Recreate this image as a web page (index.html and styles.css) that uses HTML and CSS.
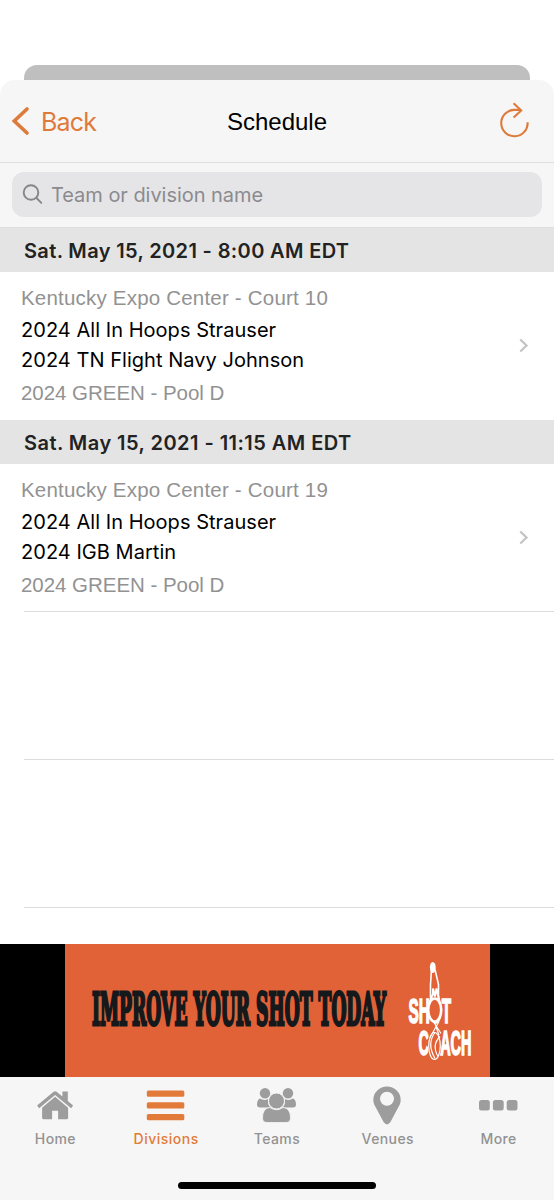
FILE: index.html
```html
<!DOCTYPE html>
<html lang="en">
<head>
<meta charset="utf-8">
<title>Schedule</title>
<link rel="stylesheet" href="styles.css">
</head>
<body>
<div class="screen">
  <div class="backdrop"><div class="backdrop-card"></div></div>
  <div class="sheet">
    <header class="navbar">
      <a class="back">
        <svg class="back-icon" width="20" height="30" viewBox="0 0 20 30"><path d="M17 3 4.300 15 17 27" fill="none" stroke="#de7a3a" stroke-width="3.600" stroke-linecap="round" stroke-linejoin="miter"/></svg>
        <span class="back-label">Back</span>
      </a>
      <h1 class="title">Schedule</h1>
      <svg class="refresh" width="34" height="38" viewBox="0 0 34 38"><g fill="none" stroke="#de7a3a" stroke-width="2.100"><path d="M29.600 20.200A13.200 13.200 0 1 1 16.600 7.900H22.500"/><path d="M15.600 1.300 23.200 8.500 15.600 15.500"/></g></svg>
    </header>
    <div class="search-bar">
      <div class="search-field">
        <svg width="22" height="22" viewBox="0 0 22 22"><g fill="none" stroke="#85858a" stroke-width="1.900" stroke-linecap="round"><circle cx="9" cy="8.500" r="7.300"/><path d="M14.500 14 19.300 18.800"/></g></svg>
        <span class="placeholder">Team or division name</span>
      </div>
    </div>
    <main class="list">
      <h2 class="section"><span class="date-a">Sat. May 15, 2021 - 8:00 AM EDT</span></h2>
      <article class="game">
        <div class="details">
          <p class="place">Kentucky Expo Center - Court 10</p>
          <p class="team">2024 All In Hoops Strauser</p>
          <p class="team">2024 TN Flight Navy Johnson</p>
          <p class="pool">2024 GREEN - Pool D</p>
        </div>
        <svg class="chevron" width="12" height="18" viewBox="0 0 12 18"><path d="M2.300 2.500 8.500 8.500 2.300 14.500" fill="none" stroke="#c3c3c5" stroke-width="2.200"/></svg>
      </article>
      <h2 class="section"><span class="date-b">Sat. May 15, 2021 - 11:15 AM EDT</span></h2>
      <article class="game short">
        <div class="details">
          <p class="place">Kentucky Expo Center - Court 19</p>
          <p class="team">2024 All In Hoops Strauser</p>
          <p class="team">2024 IGB Martin</p>
          <p class="pool">2024 GREEN - Pool D</p>
        </div>
        <svg class="chevron" width="12" height="18" viewBox="0 0 12 18"><path d="M2.300 2.500 8.500 8.500 2.300 14.500" fill="none" stroke="#c3c3c5" stroke-width="2.200"/></svg>
      </article>
      <div class="empty-row"></div>
      <div class="empty-row"></div>
      <div class="empty-row last"></div>
    </main>
    <div class="ad">
      <svg class="ad-art" width="425" height="132" viewBox="65 945 425 132">
        <text class="slogan" transform="translate(92 1025) scale(1 1.780)" textLength="294" lengthAdjust="spacingAndGlyphs">IMPROVE YOUR SHOT TODAY</text>
        <g class="brand">
          <text transform="translate(408.500 1023) scale(1 1.850)" textLength="42.500" lengthAdjust="spacingAndGlyphs">SHOT</text>
          <text transform="translate(418.500 1055) scale(1 1.850)" textLength="53" lengthAdjust="spacingAndGlyphs">COACH</text>
        </g>
        <ellipse cx="434.500" cy="1045" rx="6.800" ry="15.500" fill="#e16237"/>
        <g fill="none" stroke="#fff" stroke-width="1.200">
          <ellipse cx="434.700" cy="1010.500" rx="6.500" ry="11.500" fill="#e16237" stroke-width="2.600"/>
          <path d="M430.500 1001V985L431.500 970M438.500 1001V985L435 970" stroke-width="1.600"/>
          <path d="M430 1002 433 994V989L435 997 436.500 989 439.500 1002" stroke-width="2"/>
          <ellipse cx="434.500" cy="1046.500" rx="5.800" ry="13.500"/>
          <path d="M435 1033C428 1042 431 1052 435 1059M440 1037C434 1043 434 1050 438 1057"/>
          <path d="M434 1023 441 1034M439 1022 430 1038M435 1024 439 1036"/>
        </g>
        <ellipse cx="432.800" cy="968" rx="2.900" ry="5.500" fill="#fff"/>
      </svg>
    </div>
    <nav class="tabs">
      <a class="tab home"><svg width="44" height="44" viewBox="33.400 1082.700 44 44"><path fill="#9d9d9d" d="M42.500 1107.500 55.500 1096.500 68.500 1107.500V1117.500Q68.500 1119 67 1119H58.500V1110.500H52.500V1119H44Q42.500 1119 42.500 1117.500ZM37.500 1105.300 54 1091.500Q55.500 1090.300 57 1091.500L62.800 1096.300V1091.200H68.200V1100.800L73.500 1105.300 71.500 1108 55.500 1094.600 39.500 1108Z"/></svg><span>Home</span></a>
      <a class="tab divisions"><svg width="44" height="44" viewBox="144.200 1083 44 44"><g fill="#e27b39"><rect x="147" y="1090.500" width="37.500" height="6.200" rx="1.500"/><rect x="147" y="1102.300" width="37.500" height="6.200" rx="1.500"/><rect x="147" y="1114" width="37.500" height="6.200" rx="1.500"/></g></svg><span>Divisions</span></a>
      <a class="tab teams"><svg width="44" height="44" viewBox="255 1083 44 44"><g fill="#9d9d9d"><circle cx="265" cy="1093.300" r="5.200"/><circle cx="288" cy="1093.300" r="5.200"/><path d="M260 1098.500Q264 1101 268.200 1099Q267 1104 270.500 1107.500H261Q257 1108 257 1104.500Q257.200 1099.500 260 1098.500ZM293 1098.500Q289 1101 284.800 1099Q286 1104 282.500 1107.500H292Q296 1108 296 1104.500Q295.800 1099.500 293 1098.500Z"/><path stroke="#f6f6f6" stroke-width=".8" d="M270 1107.500Q276.500 1112 283 1107.500Q290.500 1108 290.500 1118Q290.500 1122.500 286 1122.500H267Q262.500 1122.500 262.500 1118Q262.500 1108 270 1107.500Z"/><circle cx="276.500" cy="1101" r="8" stroke="#f6f6f6"/></g></svg><span>Teams</span></a>
      <a class="tab venues"><svg width="44" height="44" viewBox="365.700 1083 44 44"><path fill="#9d9d9d" fill-rule="evenodd" d="M386.700 1086.500A13.700 13.400 0 0 1 400.400 1100Q400.400 1102.500 399.500 1104.500L390 1122.300Q386.700 1126.500 383.400 1122.300L373.900 1104.500Q373 1102.500 373 1100A13.700 13.400 0 0 1 386.700 1086.500ZM386.700 1091.800A7 7 0 1 0 386.700 1105.800A7 7 0 1 0 386.700 1091.800Z"/></svg><span>Venues</span></a>
      <a class="tab more"><svg width="44" height="44" viewBox="476.800 1083 44 44"><g fill="#9d9d9d"><rect x="478.800" y="1100" width="10.800" height="10.400" rx="2.500"/><rect x="492.700" y="1100" width="10.800" height="10.400" rx="2.500"/><rect x="506.500" y="1100" width="10.800" height="10.400" rx="2.500"/></g></svg><span>More</span></a>
    </nav>
    <div class="home-indicator"></div>
  </div>
</div>
</body>
</html>
```
FILE: styles.css
```css
* { box-sizing: border-box; margin: 0; padding: 0; }
body { background: #fff; font-family: Inter, "Liberation Sans", sans-serif; }
svg { display: block; flex: none; }
p, span, h1 { white-space: nowrap; }
.screen { width: 554px; height: 1200px; display: flex; flex-direction: column; overflow: hidden; background: #fff; }
.backdrop { padding: 65px 24px 0; height: 80px; }
.backdrop-card { height: 15px; background: #bfbfbf; border-radius: 13px 13px 0 0; }
.sheet { height: 1120px; display: flex; flex-direction: column; background: #f6f6f6; border-radius: 15px 15px 0 0; }
.navbar { height: 83px; display: grid; grid-template-columns: 1fr auto 1fr; align-items: center; border-bottom: 1.5px solid #dedede; }
.back { display: flex; align-items: center; gap: 11px; padding-left: 10px; }
.back-label { color: #de7a3a; font-size: 25px; letter-spacing: -.8px; line-height: 30px; padding-top: 1px; }
.title { font: 400 24px/30px "Liberation Sans", sans-serif; color: #000; padding-top: 2px; }
.refresh { justify-self: end; margin-right: 22.5px; }
.search-bar { height: 65px; padding: 9px 12px; border-bottom: 1px solid #dedede; background: #f6f6f6; }
.search-field { height: 45px; border-radius: 12px; background: #e5e5e7; display: flex; align-items: center; padding-left: 10px; gap: 7px; }
.placeholder { color: #8b8b8f; font-size: 20px; letter-spacing: -.04px; }
.list { height: 716px; background: #fff; }
.section { height: 44px; background: #e4e4e4; padding-left: 24px; font-size: 20px; font-weight: 600; line-height: 47px; color: #222; }
.date-a { letter-spacing: .36px; }
.date-b { letter-spacing: .46px; }
.game { height: 148px; display: flex; align-items: center; justify-content: space-between; padding: 0 24px 0 21px; }
.game.short { height: 147px; }
.details { height: 148px; padding-top: 10px; }
.place, .pool { font: 400 20.5px/32px "Liberation Sans", sans-serif; color: #929292; }
.place { letter-spacing: .2px; }
.team { font-size: 20px; line-height: 30px; color: #000; padding-top: 1px; height: 30px; letter-spacing: .04px; }
.pool { line-height: 38px; letter-spacing: -.04px; }
.empty-row { margin-left: 24px; height: 148px; border-top: 1px solid #dcdcdc; }
.empty-row.last { height: 37px; }
.ad { height: 133px; display: flex; justify-content: center; background: #000; flex: none; }
.ad-art { background: #e16237; height: 133px; }
.slogan { font: 700 25px "DejaVu Serif Condensed", "DejaVu Serif", serif; fill: #15191c; stroke: #15191c; stroke-width: 1.7px; }
.brand { font: 700 19px "Liberation Sans", sans-serif; fill: #fff; stroke: #fff; stroke-width: .9px; }
.tabs { height: 90px; display: grid; grid-template-columns: repeat(5, 1fr); flex: none; padding-top: 6px; }
.tab { display: flex; flex-direction: column; align-items: center; color: #929292; font-size: 14px; font-weight: 500; letter-spacing: .4px; line-height: 24px; }
.divisions { color: #e27b39; letter-spacing: .5px; }
.home-indicator { width: 198px; height: 7px; border-radius: 4px; background: #000; margin: 15px auto 0; flex: none; }
```
